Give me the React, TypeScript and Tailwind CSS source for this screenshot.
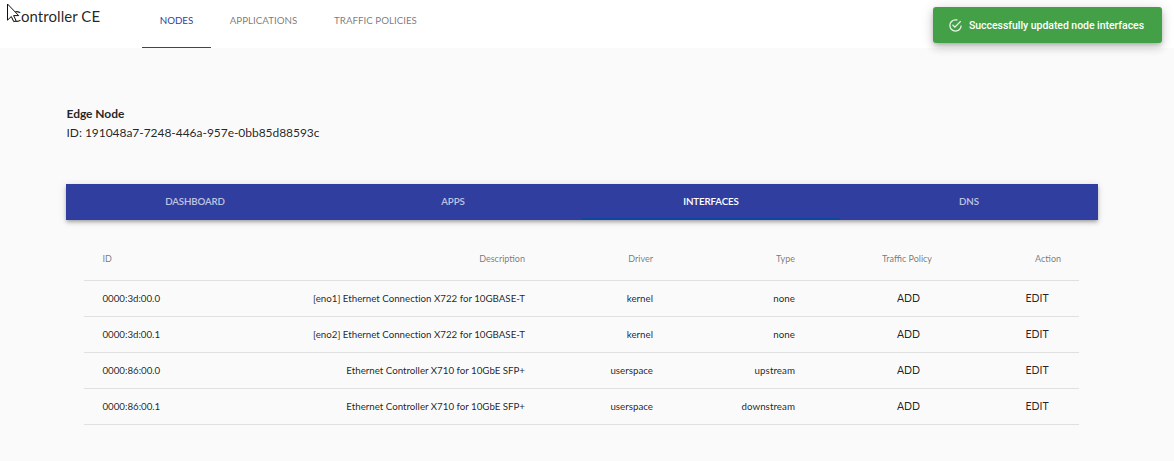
import type { ReactNode } from 'react';

interface NodeInterface {
  id: string;
  description: string;
  driver: string;
  type: string;
}

const interfaces: NodeInterface[] = [
  { id: '0000:3d:00.0', description: '[eno1] Ethernet Connection X722 for 10GBASE-T', driver: 'kernel', type: 'none' },
  { id: '0000:3d:00.1', description: '[eno2] Ethernet Connection X722 for 10GBASE-T', driver: 'kernel', type: 'none' },
  { id: '0000:86:00.0', description: 'Ethernet Controller X710 for 10GbE SFP+', driver: 'userspace', type: 'upstream' },
  { id: '0000:86:00.1', description: 'Ethernet Controller X710 for 10GbE SFP+', driver: 'userspace', type: 'downstream' },
];

const tabs = ['DASHBOARD', 'APPS', 'INTERFACES', 'DNS'];

const columns = 'grid grid-cols-[194px_289px_128px_142px_137px_105px] items-center border-b border-[#e0e0e0]';

function ActionButton({ children }: { children: ReactNode }) {
  return (
    <button className="mb-0.5 h-6 w-12 text-center text-[10.5px] leading-[18px] text-black/87">{children}</button>
  );
}

function Toast() {
  return (
    <div className="absolute top-[7px] left-[933px] flex h-9 w-[229px] items-center rounded-[3px] bg-[#43a047] pl-[15px] font-[Roboto,sans-serif] text-white shadow-[0_2px_4px_-1px_rgba(0,0,0,0.2),0_5px_8px_rgba(0,0,0,0.14),0_1px_14px_rgba(0,0,0,0.12)]">
      <svg className="mr-1.5 size-[15px] opacity-90" viewBox="0 0 24 24" fill="currentColor">
        <path d="M20,12A8,8 0 0,1 12,20A8,8 0 0,1 4,12A8,8 0 0,1 12,4C12.76,4 13.5,4.11 14.2,4.31L15.77,2.74C14.61,2.26 13.34,2 12,2A10,10 0 0,0 2,12A10,10 0 0,0 12,22A10,10 0 0,0 22,12M7.91,10.08L6.5,11.5L11,16L21,6L19.59,4.58L11,13.17L7.91,10.08Z" />
      </svg>
      <span className="pt-px text-[10.5px] leading-4 font-medium tracking-[-0.04px] whitespace-nowrap">
        Successfully updated node interfaces
      </span>
    </div>
  );
}

export default function App() {
  return (
    <div className="relative h-[461px] w-[1174px] overflow-hidden bg-[#fafafa] font-[Lato,sans-serif] text-black/87">
      <header className="flex h-12 bg-white">
        <h1 className="w-[142px] pt-[5px] pl-[11px] text-[15px] leading-[22px] tracking-[0.06px] whitespace-nowrap">
          Controller CE
        </h1>
        <nav className="flex text-[9.75px] leading-[41px] whitespace-nowrap text-black/54">
          <a className="h-12 w-[69px] border-b border-[#303f9f] text-center text-[#303f9f]">NODES</a>
          <a className="w-[105px] text-center">APPLICATIONS</a>
          <a className="w-[119px] text-center">TRAFFIC POLICIES</a>
        </nav>
      </header>

      <main className="pt-14 pr-[76px] pl-[66px]">
        <section className="pl-[0.5px] text-xs leading-[19px]">
          <h2 className="font-bold tracking-[-0.04px]">Edge Node</h2>
          <p className="tracking-[-0.04px]">ID: 191048a7-7248-446a-957e-0bb85d88593c</p>
        </section>

        <nav className="mt-[42px] grid h-9 grid-cols-4 bg-[#303f9f] text-center text-[9.75px] leading-[35px] font-semibold tracking-[-0.15px] text-white/70 shadow-[0_2px_3px_-1px_rgba(0,0,0,0.2),0_3px_4px_rgba(0,0,0,0.14),0_1px_8px_rgba(0,0,0,0.12)]">
          {tabs.map((tab) => (
            <a key={tab} className={tab === 'INTERFACES' ? 'h-9 border-b-2 border-[#0d47a1] text-white' : 'h-9'}>
              {tab}
            </a>
          ))}
        </nav>

        <section className="ml-[18px] w-[995px] pt-[17px] text-[9.75px]">
          <div className={`${columns} h-11 text-[9px] text-black/54`}>
            <span className="pl-[18.5px]">ID</span>
            <span className="pr-[42px] text-right">Description</span>
            <span className="pr-[42px] text-right">Driver</span>
            <span className="pr-[42px] text-right">Type</span>
            <span className="pr-[42px] text-right">Traffic Policy</span>
            <span className="pr-[18px] text-right">Action</span>
          </div>
          {interfaces.map((item) => (
            <div key={item.id} className={`${columns} h-9`}>
              <span className="pl-[18.5px] tracking-[-0.03px]">{item.id}</span>
              <span className="pr-[42px] text-right tracking-[-0.02px] whitespace-nowrap">{item.description}</span>
              <span className="pr-[42px] text-right">{item.driver}</span>
              <span className="pr-[42px] text-right tracking-[0.05px]">{item.type}</span>
              <span className="flex justify-end pr-[41.5px]">
                <ActionButton>ADD</ActionButton>
              </span>
              <span className="flex justify-end pr-[18px]">
                <ActionButton>EDIT</ActionButton>
              </span>
            </div>
          ))}
        </section>
      </main>

      <Toast />
      <svg className="absolute top-[3px] left-[6px] h-5 w-3.5" viewBox="0 0 14 20">
        <path d="M1.5 1v16.2l3.8-3.7 2.5 5.2 2.3-1.1-2.5-5h5.1z" fill="white" stroke="#111" strokeWidth="1" />
      </svg>
    </div>
  );
}
